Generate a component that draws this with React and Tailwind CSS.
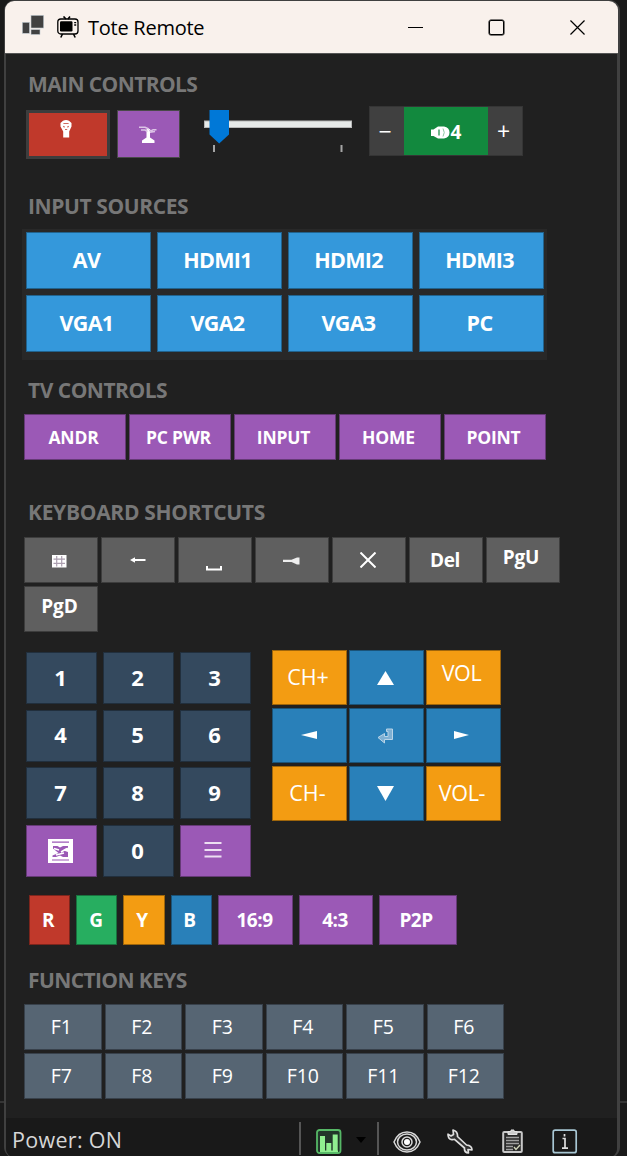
import React, { useState } from 'react';
import clsx from 'clsx';

const inputs = ['AV', 'HDMI1', 'HDMI2', 'HDMI3', 'VGA1', 'VGA2', 'VGA3', 'PC'];
const tvKeys = ['ANDR', 'PC PWR', 'INPUT', 'HOME', 'POINT'];
const functionKeys = ['F1', 'F2', 'F3', 'F4', 'F5', 'F6', 'F7', 'F8', 'F9', 'F10', 'F11', 'F12'];

const AppLogo = () => (
  <svg width="22" height="20" viewBox="0 0 22 20" fill="#414141" stroke="#c3cbd2" strokeWidth="0.6">
    <rect x="0.3" y="7.3" width="7.2" height="11" />
    <rect x="9" y="0.3" width="12.7" height="12.7" />
    <rect x="9" y="14.6" width="9" height="4.9" />
  </svg>
);

const TvIcon = () => (
  <svg width="22" height="22" viewBox="0 0 22 22" fill="none" stroke="#000" strokeWidth="1.3">
    <path d="M6.5 0.5 9 3M13 0.5 11 3M5.5 18 3.8 21.5M16.5 18l1.7 3.5" strokeWidth="1.6" />
    <rect x="0.8" y="3" width="20.2" height="15" rx="3" />
    <rect x="3" y="5.3" width="12.5" height="10.2" rx="1.2" fill="#000" stroke="none" />
    <path d="M17.2 6.6h2M17.2 9h2" strokeWidth="1.4" />
  </svg>
);

const TorchIcon = () => (
  <svg width="12" height="18" viewBox="0 0 12 18" fill="#fff">
    <path d="M3 .8Q6-.6 9 .8L11.500 3v3.500L9.200 11.500V17.500H3.200V11.500L.5 6.500V3z" />
    <path d="M3.400 3.500h5.200M3.200 6.200l1.500 1M8.800 6.200l-1.500 1M5 9.500h2.200" stroke="#cf6a5f" strokeWidth="1.200" />
  </svg>
);

const LampIcon = () => (
  <svg width="18" height="17" viewBox="0 0 18 17" fill="#fff">
    <path d="M7.500 3h3.500v8.500l4.500 3v2.500H3v-2.500l4.500-3z" />
    <path d="M0 1.200h6L10 3M2 4h4l2.500 1.500M10 4.500h3l1-.8h3.500M11 6.200l5-.8" stroke="#dcc3e6" strokeWidth="1.500" fill="none" />
  </svg>
);

const Slider = () => (
  <svg width="148" height="44" viewBox="0 0 148 44">
    <rect x="0.5" y="11" width="147" height="6.500" fill="#e7eae9" stroke="#b8b8b8" />
    <path d="M5.500 0h19.500v24.500L15.200 33.500 5.500 24.500z" fill="#0078d7" />
    <path d="M10 35v7M137.500 35v7" stroke="#a5a5a5" strokeWidth="2" />
  </svg>
);

const SpeakerIcon = () => (
  <svg width="19" height="13" viewBox="0 0 19 13" fill="#fff">
    <path d="M0 3.500h2.500L7 .5h6q5.500 1 5.500 6T13 12.500H7L2.500 10H0z" />
    <path d="M8 3.500v6" stroke="#12893e" strokeWidth="1.200" fill="none" />
    <path d="M12 2.500q2.500 4 0 8" stroke="#8cc8a2" strokeWidth="1" fill="none" />
  </svg>
);

const WindowsKeyIcon = () => (
  <svg width="15" height="13" viewBox="0 0 15 13">
    <rect width="14.500" height="12.500" fill="#fff" />
    <path d="M4.700 1v10.500M9.700 1v10.500M1.500 4.200h11.500M1.500 8.300h11.500" stroke="#ac9fb0" strokeWidth="1.200" />
  </svg>
);

const ArrowLeftIcon = () => (
  <svg width="16" height="6" viewBox="0 0 16 6" fill="#fff">
    <path d="M0 3 5 .2v1.700h10.500v2.200H5v1.700z" />
  </svg>
);

const SpaceIcon = () => (
  <svg width="16" height="5" viewBox="0 0 16 5" fill="none" stroke="#fff" strokeWidth="2">
    <path d="M1 0v3.500h14V0" />
  </svg>
);

const TabIcon = () => (
  <svg width="17" height="8" viewBox="0 0 17 8" fill="#eee">
    <path d="M0 2.800h8.500L14 .5h2.500v7H14L8.500 5H0z" />
  </svg>
);

const CloseIcon = ({ size = 16, width = 1.3, color = '#000' }) => (
  <svg width={size} height={size} viewBox="0 0 16 16" fill="none" stroke={color} strokeWidth={width}>
    <path d="M.5.5l15 15M15.500.5l-15 15" />
  </svg>
);

const GuideIcon = () => (
  <svg width="25" height="24" viewBox="0 0 25 24">
    <rect width="25" height="24" fill="#fff" />
    <path d="M4 3.200h17M4 21h17" stroke="#9b59b6" strokeWidth="1.200" />
    <path d="M5 7h4.500l2.500 1.500L15 7h5v1.500l-4.500 3 4.500 1.500v5h-5l-3-1.500L8 18H4.500v-1.500l6-2.500L5 9.500z" fill="#9b59b6" />
    <path d="M6 9.500l5 1.500M13 13l6-3.500M8 16l8-2" stroke="#fff" strokeWidth="1.500" />
  </svg>
);

const MenuIcon = () => (
  <svg width="18" height="17" viewBox="0 0 18 17" stroke="#eddff2" strokeWidth="2">
    <path d="M.5 2h17M.5 9h17M.5 15.500h17" />
  </svg>
);

const EnterIcon = () => (
  <svg width="17" height="16" viewBox="0 0 17 16" fill="#7fb0d3" stroke="#b9d4e7" strokeWidth="1">
    <path d="M9.500 1h6v10.500H7.500V15L1 9.500 7.500 5.500v3h3.500V3.500h-1.500z" />
  </svg>
);

const ArrowIcon = ({ points, width, height }) => (
  <svg width={width} height={height} viewBox={`0 0 ${width} ${height}`} fill="#fff">
    <polygon points={points} />
  </svg>
);

const ChartIcon = () => (
  <svg width="26" height="25" viewBox="0 0 26 25">
    <rect x="1" y="1" width="23.500" height="23" rx="2.500" fill="#22352a" stroke="#56b866" strokeWidth="1.800" />
    <path d="M4 7h5v15H4zM10.300 14h5v8h-5zM16.700 5.500h5V22h-5z" fill="#90ee90" />
    <path d="M4 22.300h18" stroke="#90ee90" strokeWidth="1.500" />
  </svg>
);

const EyeIcon = () => (
  <svg width="28" height="22" viewBox="0 0 28 22" fill="none" stroke="#d9d9d9" strokeWidth="1.500">
    <path d="M1 11Q5 1 14 1t13 10Q23 21 14 21T1 11z" />
    <ellipse cx="14" cy="11" rx="9.500" ry="8" />
    <circle cx="14" cy="11" r="5" />
    <circle cx="14" cy="11" r="3" fill="#fff" stroke="none" />
  </svg>
);

const WrenchIcon = () => (
  <svg width="26" height="25" viewBox="0 0 26 25" fill="#303030" stroke="#dedede" strokeWidth="1.700" strokeLinejoin="round">
    <path d="M6 1l.5 4.500L4 7 1 5.200Q1 9.500 4 10.500q2 .5 3.500-.2L17.500 19q-.5 4.500 4 5l-.5-3.500 4 .5q0-4.500-5.500-5L10.500 7.500Q11 2.500 6 1z" />
  </svg>
);

const ClipboardIcon = () => (
  <svg width="21" height="24" viewBox="0 0 21 24" fill="none">
    <rect x="1.200" y="3" width="18.600" height="20" rx="1" fill="#292929" stroke="#c8c8c8" strokeWidth="2" />
    <path d="M6 5.500V2.500h3V1h3v1.500h3v3z" fill="#ccc" stroke="#e4e4e4" />
    <path d="M4 8.500h13M4 11.500h13M4 14.500h13M4 17.500h7M4 20.500h7" stroke="#a0a0a0" strokeWidth="1.400" />
    <path d="M12 18l2 2.500 4-4.500" stroke="#d2d6bb" strokeWidth="1.400" />
  </svg>
);

const InfoIcon = () => (
  <svg width="26" height="25" viewBox="0 0 26 25" fill="none" stroke="#a8c7d4">
    <rect x="1.200" y="1.200" width="23" height="22.500" rx="2" strokeWidth="1.700" />
    <path d="M10.500 9.500h2.500v9.500M10 19.200h6M12.500 5v2.500" stroke="#dedede" strokeWidth="1.700" />
  </svg>
);

const SectionTitle = ({ children, className }) => (
  <h2 className={clsx('pl-[22px] h-6 leading-[23px] text-[21px] font-bold text-[#777] whitespace-nowrap', className)}>
    {children}
  </h2>
);

const Key = ({ children, className }) => (
  <button className={clsx('flex items-center justify-center border border-black/35 text-white whitespace-nowrap', className)}>
    {children}
  </button>
);

const TitleBar = () => (
  <header className="flex h-[53px] -ml-px -mr-px items-center bg-[#f9f1ec] text-black rounded-t-[9px] pl-[17px] border-b border-[#555]">
    <div className="mb-1"><AppLogo /></div>
    <div className="ml-[13px]"><TvIcon /></div>
    <h1 className="ml-[9px] w-[120px] pt-px text-[20px] tracking-[-0.25px] whitespace-nowrap">Tote Remote</h1>
    <div className="ml-[200px] w-[15px] h-px bg-black" />
    <div className="ml-[66px] w-[15px] h-[15px] border-[1.500px] border-black rounded-[2px] shadow-[0_0_0_0.5px_#000]" />
    <div className="ml-[66px]"><CloseIcon size={15} /></div>
  </header>
);

const MainControls = ({ volume, setVolume }) => (
  <div className="flex h-[54px] pl-[20px]">
    <button className="mt-1 flex w-[84px] h-[49px] justify-center border-[3.500px] border-[#3d3d3d] bg-[#c0392b] pt-[7px] pr-1">
      <TorchIcon />
    </button>
    <button className="mt-1 ml-[7px] flex w-[63px] h-[48px] items-center justify-center border-[1.500px] border-[#494949] bg-[#9b59b6] pr-[2px]">
      <LampIcon />
    </button>
    <div className="mt-1 ml-[24px] w-[148px]"><Slider /></div>
    <div className="ml-[17px] flex w-[154px] h-[50px] border border-[#353535] text-white">
      <button className="w-[34px] pr-1 bg-[#404040] text-[23px]" onClick={() => setVolume(volume - 1)}>−</button>
      <div className="flex w-[84px] items-center justify-center gap-px bg-[#12893e] pt-[2px] text-[19px] font-bold">
        <SpeakerIcon />
        {volume}
      </div>
      <button className="w-[34px] pr-[3px] bg-[#404040] text-[23px]" onClick={() => setVolume(volume + 1)}>+</button>
    </div>
  </div>
);

const shortcutKey = 'w-[74px] h-[46px] bg-[#5f5f5f] text-[19px] font-bold';

const Shortcuts = () => (
  <div className="ml-[18px] flex w-[540px] flex-wrap gap-[3px]">
    <Key className={clsx(shortcutKey, 'pr-1 pt-[2px]')}><WindowsKeyIcon /></Key>
    <Key className={clsx(shortcutKey, 'pr-px')}><ArrowLeftIcon /></Key>
    <Key className={clsx(shortcutKey, 'pt-[17px] pr-[2px]')}><SpaceIcon /></Key>
    <Key className={clsx(shortcutKey, 'pt-[2px] pr-[2px]')}><TabIcon /></Key>
    <Key className={clsx(shortcutKey, 'pr-[3px]')}><CloseIcon size={16} width={2} color="#fff" /></Key>
    <Key className={clsx(shortcutKey, 'pr-[2px] tracking-[-0.4px]')}>Del</Key>
    <Key className={clsx(shortcutKey, 'pb-[6px] pr-1 tracking-[-0.1px]')}>PgU</Key>
    <Key className={clsx(shortcutKey, 'pb-[6px] pr-[3px] tracking-[-0.1px]')}>PgD</Key>
  </div>
);

const digitKey = 'bg-[#34495e] text-[22px] font-bold pr-px pb-[2px]';

const NumberPad = () => (
  <div className="grid grid-cols-[repeat(3,71px)] auto-rows-[52px] gap-x-[6px] gap-y-[5.700px]">
    {[1, 2, 3, 4, 5, 6, 7, 8, 9].map((digit) => (
      <Key key={digit} className={digitKey}>{digit}</Key>
    ))}
    <Key className="bg-[#9b59b6] pr-px"><GuideIcon /></Key>
    <Key className={digitKey}>0</Key>
    <Key className="bg-[#9b59b6] pb-[3px] pr-1"><MenuIcon /></Key>
  </div>
);

const blueKey = 'bg-[#2980b9]';
const orangeKey = 'bg-[#f39c12] text-[21.500px] text-[#fff3df]';

const NavigationPad = () => (
  <div className="grid grid-cols-[repeat(3,75px)] auto-rows-[55px] gap-x-[2px] gap-y-[2.800px]">
    <Key className={clsx(orangeKey, 'pr-[3px]')}>CH+</Key>
    <Key className={clsx(blueKey, 'pt-px pr-[2px]')}><ArrowIcon width={17} height={14} points="8.5,0 17,14 0,14" /></Key>
    <Key className={clsx(orangeKey, 'pb-[9px] pr-[4px] tracking-[-0.4px]')}>VOL</Key>
    <Key className={clsx(blueKey, 'pr-px')}><ArrowIcon width={16} height={8} points="0,4 16,0 16,8" /></Key>
    <Key className={clsx(blueKey, 'pt-[2px] pr-[2px]')}><EnterIcon /></Key>
    <Key className={clsx(blueKey, 'pr-[4px]')}><ArrowIcon width={15} height={8} points="0,0 15,4 0,8" /></Key>
    <Key className={clsx(orangeKey, 'pr-[4px]')}>CH-</Key>
    <Key className={clsx(blueKey, 'pr-[2px]')}><ArrowIcon width={17} height={15} points="0,0 17,0 8.5,15" /></Key>
    <Key className={clsx(orangeKey, 'pr-[3px] tracking-[-0.3px]')}>VOL-</Key>
  </div>
);

const StatusBar = () => (
  <footer className="flex h-[39px] bg-[#191919] pl-[6px] text-[#d6d6d6] rounded-b-[8px]">
    <span className="w-[287px] pt-[7px] text-[21.500px] tracking-[0.3px] leading-[29px]">Power: ON</span>
    <div className="mt-[4px] w-[2px] h-[33px] bg-[#555]" />
    <div className="ml-[15px] mt-[11px]"><ChartIcon /></div>
    <div className="ml-[14px] mt-[19px]">
      <svg width="10" height="6" viewBox="0 0 10 6"><path d="M0 0h10L5 6z" fill="#000" /></svg>
    </div>
    <div className="ml-[11px] mt-[4px] w-[2px] h-[33px] bg-[#555]" />
    <div className="ml-[14px] mt-[13px]"><EyeIcon /></div>
    <div className="ml-[26px] mt-[11px]"><WrenchIcon /></div>
    <div className="ml-[29px] mt-[11px]"><ClipboardIcon /></div>
    <div className="ml-[29px] mt-[11px]"><InfoIcon /></div>
  </footer>
);

const App = () => {
  const [volume, setVolume] = useState(4);

  return (
    <div className="relative h-[1156px] w-[627px] overflow-hidden bg-[#1a1a1a] pl-1 font-['Open_Sans','Noto_Sans',sans-serif]">
      <div className="absolute left-0 top-[1101px] h-[2px] w-full bg-[#353535]" />
      <div className="relative flex h-[1158px] w-[616px] flex-col rounded-[11px] border-l-2 border-r-[3px] border-t border-b border-[#404040] bg-[#202020]">
        <TitleBar />
        <main className="flex h-[1064px] flex-none flex-col">
          <SectionTitle className="mt-[19px] mb-[9px] tracking-[-0.6px]">MAIN CONTROLS</SectionTitle>
          <MainControls volume={volume} setVolume={setVolume} />

          <SectionTitle className="mt-[35px] mb-[10px] tracking-[-0.4px]">INPUT SOURCES</SectionTitle>
          <div className="ml-[16px] grid w-[525px] h-[131px] grid-cols-[repeat(4,125px)] auto-rows-[57px] gap-x-[6px] gap-y-[6px] bg-[#282828] pl-[3.500px] pt-[3px]">
            {inputs.map((name) => (
              <Key key={name} className="bg-[#3498db] pr-[3px] pb-px text-[21.500px] font-bold tracking-[-0.7px]">{name}</Key>
            ))}
          </div>

          <SectionTitle className="mt-[19px] mb-[11px] tracking-[-0.5px]">TV CONTROLS</SectionTitle>
          <div className="ml-[18px] flex h-[46px] gap-[3px]">
            {tvKeys.map((name) => (
              <Key key={name} className="w-[102px] bg-[#9b59b6] pr-[3px] text-[17.500px] font-bold tracking-[-0.2px]">{name}</Key>
            ))}
          </div>

          <SectionTitle className="mt-[41px] mb-[12px] tracking-[-0.3px]">KEYBOARD SHORTCUTS</SectionTitle>
          <Shortcuts />

          <div className="ml-[19.500px] mt-[18px] flex h-[227px] gap-[21.500px]">
            <div className="pt-[2px]"><NumberPad /></div>
            <NavigationPad />
          </div>

          <div className="ml-[23px] mt-[18px] flex h-[50px] gap-[6px] text-[19px] font-bold tracking-[-0.5px]">
            <Key className="w-[41px] bg-[#c0392b] pr-[3px]">R</Key>
            <Key className="w-[41px] bg-[#27ae60] pr-px">G</Key>
            <Key className="w-[42px] bg-[#f39c12] pr-[4px]">Y</Key>
            <Key className="w-[41px] bg-[#2980b9] pr-[4px]">B</Key>
            <Key className="w-[75px] bg-[#9b59b6] pr-[2px]">16:9</Key>
            <Key className="w-[74px] bg-[#9b59b6] pr-[2px]">4:3</Key>
            <Key className="w-[78px] bg-[#9b59b6] pr-[4px]">P2P</Key>
          </div>

          <SectionTitle className="mt-[24px] mb-[11px] tracking-[-0.6px]">FUNCTION KEYS</SectionTitle>
          <div className="ml-[18px] grid grid-cols-[repeat(6,77.500px)] auto-rows-[46px] gap-[3px]">
            {functionKeys.map((name) => (
              <Key key={name} className="bg-[#566573] pr-[3px] text-[19.500px] tracking-[-0.2px]">{name}</Key>
            ))}
          </div>
        </main>
        <StatusBar />
      </div>
    </div>
  );
};

export default App;
